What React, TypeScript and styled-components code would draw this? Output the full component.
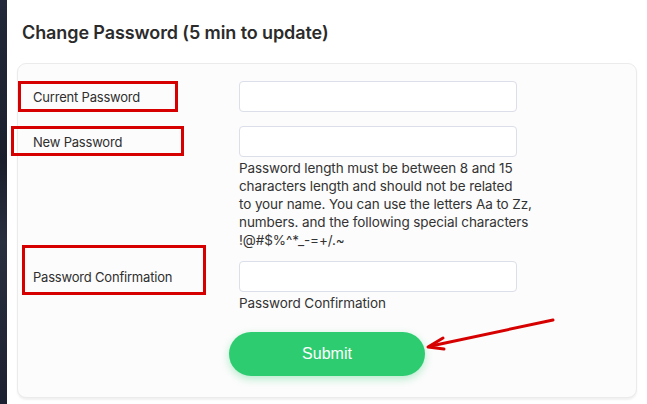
import React from "react";
import styled, { createGlobalStyle } from "styled-components";

const Global = createGlobalStyle`
  html, body { margin: 0; padding: 0; background: #ffffff; }
  body { font-family: Inter, "Noto Sans", sans-serif; color: #2f2f2f; }
  * { box-sizing: border-box; }
`;

const Page = styled.div`
  display: flex;
  width: 647px;
  height: 404px;
  overflow: hidden;
  background: #ffffff;
`;

const DarkEdge = styled.div`
  width: 7px;
  flex: none;
  height: 100%;
  background: linear-gradient(180deg, #23283a 0%, #1b1f2c 40%, #2a2f40 60%, #1c2030 100%);
`;

const Main = styled.div`
  flex: 1;
  padding: 21px 0 0 10px;
  display: flex;
  flex-direction: column;
`;

const Title = styled.h2`
  margin: 0 0 18px 5px;
  font-size: 18px;
  line-height: 24px;
  font-weight: 600;
  color: #2b2b2b;
  letter-spacing: -0.1px;
`;

const Card = styled.div`
  position: relative;
  width: 620px;
  height: 335px;
  background: #fcfcfc;
  border: 1px solid #ebebeb;
  border-radius: 9px;
  box-shadow: 0 2px 2px rgba(0, 0, 0, 0.06);
  padding: 17px 0 0 0;
  display: flex;
  flex-direction: column;
`;

const Row = styled.div<{ $after: number }>`
  display: grid;
  grid-template-columns: 221px 300px;
  margin-bottom: ${(p) => p.$after}px;
`;

const LabelCell = styled.div`
  position: relative;
  height: 31px;
  display: flex;
  align-items: center;
  padding-left: 15px;
  font-size: 13px;
  color: #2f2f2f;
  letter-spacing: -0.2px;
`;

const Annotation = styled.div<{ $l: number; $t: number; $w: number; $h: number }>`
  position: absolute;
  left: ${(p) => p.$l}px;
  top: ${(p) => p.$t}px;
  width: ${(p) => p.$w}px;
  height: ${(p) => p.$h}px;
  border: 3px solid #d60000;
  pointer-events: none;
`;

const Field = styled.div`
  display: flex;
  flex-direction: column;
`;

const Input = styled.input`
  width: 278px;
  height: 31px;
  border: 1px solid #dcdee9;
  border-radius: 4px;
  background: #ffffff;
  outline: none;
  padding: 0 10px;
  font-family: inherit;
`;

const Help = styled.div`
  margin-top: 2px;
  font-size: 13.5px;
  line-height: 18px;
  color: #333333;
  letter-spacing: -0.1px;
  white-space: nowrap;
`;

const ButtonRow = styled.div`
  display: flex;
  justify-content: center;
  margin-top: 20px;
`;

const Submit = styled.button`
  width: 196px;
  height: 44px;
  border: none;
  border-radius: 22px;
  background: #2ecc71;
  color: #ffffff;
  font-family: "Liberation Sans", Arial, sans-serif;
  font-size: 16px;
  box-shadow: 0 3px 8px rgba(46, 204, 113, 0.35);
  cursor: pointer;
`;

const ArrowSvg = styled.svg`
  position: absolute;
  left: 400px;
  top: 245px;
  overflow: visible;
`;

export default function App() {
  return (
    <>
      <Global />
      <Page>
        <DarkEdge />
        <Main>
          <Title>Change Password (5 min to update)</Title>
          <Card>
            <Row $after={14}>
              <LabelCell>
                <Annotation $l={0} $t={0} $w={160} $h={31} />
                Current Password
              </LabelCell>
              <Field>
                <Input type="password" />
              </Field>
            </Row>
            <Row $after={12}>
              <LabelCell>
                <Annotation $l={-7} $t={0} $w={173} $h={30} />
                New Password
              </LabelCell>
              <Field>
                <Input type="password" />
                <Help>
                  Password length must be between 8 and 15
                  <br />
                  characters length and should not be related
                  <br />
                  to your name. You can use the letters Aa to Zz,
                  <br />
                  numbers. and the following special characters
                  <br />
                  !@#$%^*_-=+/.~
                </Help>
              </Field>
            </Row>
            <Row $after={0}>
              <LabelCell>
                <Annotation $l={4} $t={-16} $w={184} $h={50} />
                Password Confirmation
              </LabelCell>
              <Field>
                <Input type="password" />
                <Help>Password Confirmation</Help>
              </Field>
            </Row>
            <ButtonRow>
              <Submit>Submit</Submit>
            </ButtonRow>
            <ArrowSvg width="140" height="40" viewBox="0 0 140 40">
              <line x1="135" y1="11" x2="13" y2="37" stroke="#d60000" strokeWidth="3" strokeLinecap="round" />
              <path d="M25 29 L10 38 L26 40" fill="none" stroke="#d60000" strokeWidth="3" strokeLinecap="round" strokeLinejoin="round" />
            </ArrowSvg>
          </Card>
        </Main>
      </Page>
    </>
  );
}
